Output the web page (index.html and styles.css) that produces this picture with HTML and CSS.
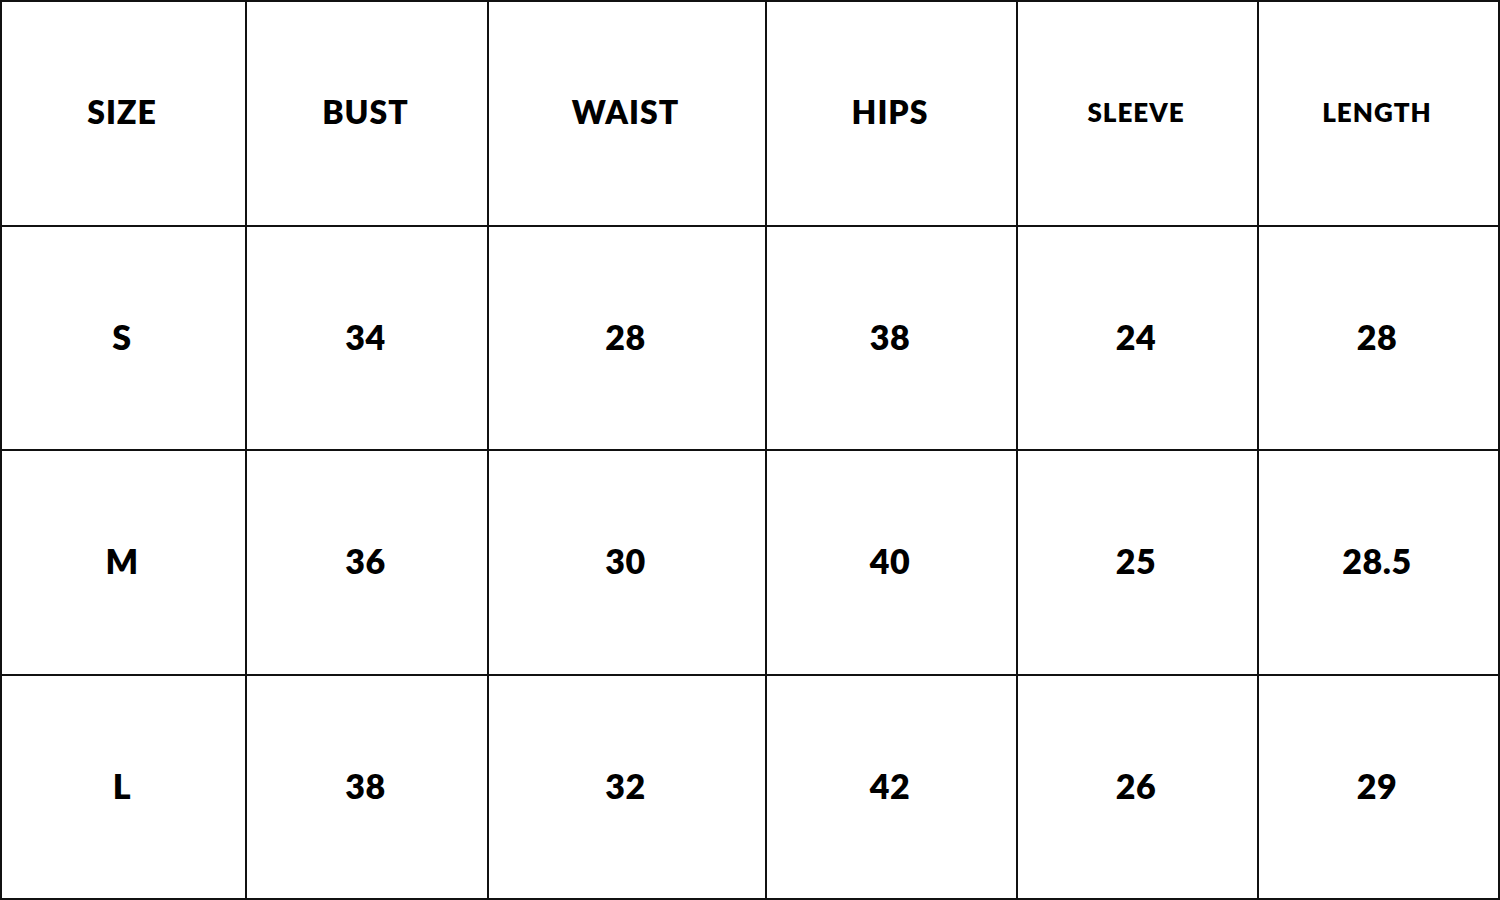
FILE: index.html
```html
<!DOCTYPE html>
<html lang="en">
<head>
<meta charset="utf-8">
<title>Size Chart</title>
<link rel="stylesheet" href="styles.css">
</head>
<body>
<div class="chart">
  <div class="cell head">SIZE</div>
  <div class="cell head">BUST</div>
  <div class="cell head">WAIST</div>
  <div class="cell head">HIPS</div>
  <div class="cell head small">SLEEVE</div>
  <div class="cell head small">LENGTH</div>

  <div class="cell">S</div>
  <div class="cell">34</div>
  <div class="cell">28</div>
  <div class="cell">38</div>
  <div class="cell">24</div>
  <div class="cell">28</div>

  <div class="cell">M</div>
  <div class="cell">36</div>
  <div class="cell">30</div>
  <div class="cell">40</div>
  <div class="cell">25</div>
  <div class="cell">28.5</div>

  <div class="cell">L</div>
  <div class="cell">38</div>
  <div class="cell">32</div>
  <div class="cell">42</div>
  <div class="cell">26</div>
  <div class="cell">29</div>
</div>
</body>
</html>
```
FILE: styles.css
```css
html, body {
  margin: 0;
  padding: 0;
  background: #ffffff;
}
.chart {
  width: 1500px;
  height: 900px;
  box-sizing: border-box;
  display: grid;
  grid-template-columns: 243px 240px 276px 249px 239px 239px;
  grid-template-rows: 223px 222px 223px 222px;
  gap: 2px;
  padding: 2px;
  background: #111111;
}
.cell {
  background: #ffffff;
  display: flex;
  align-items: center;
  justify-content: center;
  padding: 0 3px 4px 0;
  font-family: "Lato", "Liberation Sans", sans-serif;
  font-weight: 800;
  font-size: 34px;
  color: #000000;
  letter-spacing: 0.5px;
}
.head {
  font-size: 32px;
  letter-spacing: 1px;
}
.head.small {
  font-size: 26px;
  letter-spacing: 1px;
}
```
